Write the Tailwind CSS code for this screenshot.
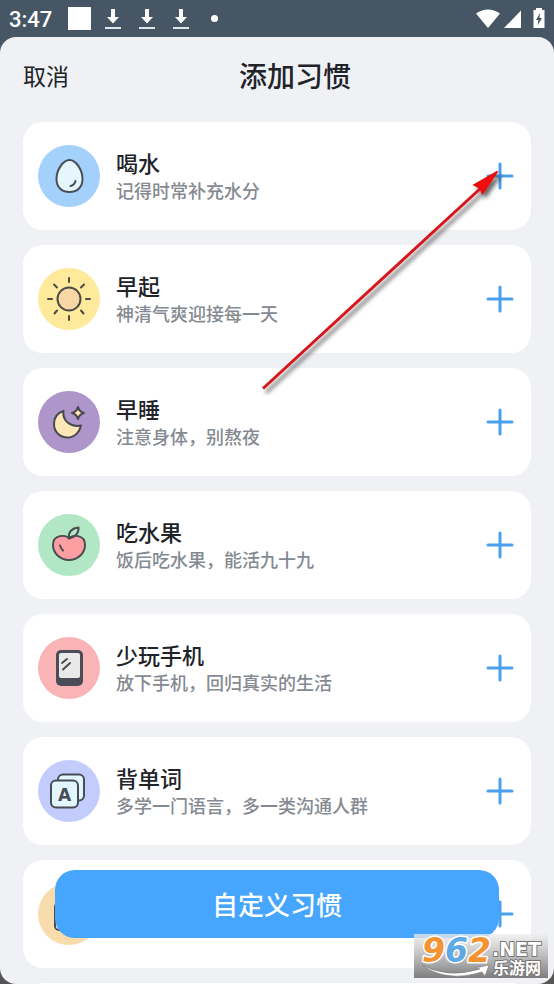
<!DOCTYPE html>
<html lang="zh-CN">
<head>
<meta charset="utf-8">
<meta name="viewport" content="width=device-width, initial-scale=1">
<title>添加习惯</title>
<script src="https://cdn.jsdelivr.net/npm/@tailwindcss/browser@4"></script>
</head>
<body class="relative flex h-screen flex-col overflow-hidden bg-linear-to-b from-[#465664] from-50% to-[#555555] to-50% font-['Noto_Sans_CJK_SC',sans-serif] text-[#202328]">

<svg class="hidden" aria-hidden="true">
  <symbol id="download" viewBox="0 0 16 22">
    <path d="M6 1h4v8h4l-6 6.500L2 9h4z" fill="#fff"/><path d="M0 19h16v2H0z" fill="#dfe8ea"/>
  </symbol>
  <symbol id="plus" viewBox="0 0 28 28">
    <path d="M14 2v24M2 14h24" fill="none" stroke="#4a9fee" stroke-width="3" stroke-linecap="round"/>
  </symbol>
</svg>

<header class="flex h-[37px] shrink-0 items-center justify-between pr-[9px] pl-[9px] text-white">
  <div class="flex items-center">
    <time class="w-[59px] pt-[2px] font-[Roboto,sans-serif] text-[22px] leading-6 font-medium">3:47</time>
    <span class="mr-[14px] size-[23px] bg-white"></span>
    <div class="flex items-center gap-[18px]">
      <svg class="h-[22px] w-4"><use href="#download"/></svg>
      <svg class="h-[22px] w-4"><use href="#download"/></svg>
      <svg class="h-[22px] w-4"><use href="#download"/></svg>
    </div>
    <span class="ml-[22px] size-[7px] rounded-full bg-white"></span>
  </div>
  <div class="flex items-end gap-1">
    <svg class="h-5 w-6" viewBox="0 0 24 20"><path d="M0 4.500Q12-3.500 24 4.500L12 19z" fill="#fff"/></svg>
    <svg class="h-5 w-[18px]" viewBox="0 0 18 20"><path d="M0 19L17 1.500V19z" fill="#fff"/></svg>
    <svg class="ml-[7px] h-[21px] w-3" viewBox="0 0 12 21"><path d="M3 0h6v2h2.500v18H.5V2H3z" fill="#fff"/><path d="M7 5L3 12h2.500L4.500 17.500 9 10H6.500z" fill="#465664"/></svg>
  </div>
</header>

<main class="flex min-h-0 flex-1 flex-col overflow-hidden rounded-[16px] bg-[#f0f1f5]">
  <div class="grid h-[85px] shrink-0 grid-cols-[1fr_auto_1fr] items-center px-[23px] pb-[9px]">
    <button type="button" class="justify-self-start text-[23px] leading-8">取消</button>
    <h1 class="ml-9 text-[28px] leading-10 font-medium">添加习惯</h1>
  </div>

  <ul class="flex flex-col gap-[15px] px-[23px]">
    <li class="flex h-[108px] shrink-0 items-center gap-4 rounded-[20px] bg-white pr-[17px] pl-[15px]">
      <svg class="size-[62px] shrink-0 rounded-full bg-[#a3d1fc]" viewBox="0 0 62 62" fill="none" stroke="#474d55" stroke-width="2" stroke-linecap="round">
        <path d="M31.500 15C25 15 18.500 25 18.500 34c0 8 5 13 13 13s13-5 13-13C44.500 25 38 15 31.500 15z" fill="#e6f6fd"/>
        <path d="M37.500 36q-1 4-5 5"/>
      </svg>
      <div class="flex min-w-0 flex-1 flex-col gap-[2px]">
        <h2 class="text-[22px] leading-[26px] font-medium">喝水</h2>
        <p class="text-[18px] leading-[26px] font-medium text-[#858a92]">记得时常补充水分</p>
      </div>
      <button type="button" aria-label="添加喝水"><svg class="size-7"><use href="#plus"/></svg></button>
    </li>

    <li class="flex h-[108px] shrink-0 items-center gap-4 rounded-[20px] bg-white pr-[17px] pl-[15px]">
      <svg class="size-[62px] shrink-0 rounded-full bg-[#ffea9c]" viewBox="0 0 62 62" fill="none" stroke="#4d4a48" stroke-width="2" stroke-linecap="round">
        <circle cx="31" cy="31" r="11.500" fill="#f8d7a4"/>
        <path d="M31 10v4M31 48v4M10 31h4M48 31h4M16 16.500l3 3M46 16.500l-3 3M16.500 45.500l2.500-3M45.500 45.500l-2.500-3"/>
      </svg>
      <div class="flex min-w-0 flex-1 flex-col gap-[2px]">
        <h2 class="text-[22px] leading-[26px] font-medium">早起</h2>
        <p class="text-[18px] leading-[26px] font-medium text-[#858a92]">神清气爽迎接每一天</p>
      </div>
      <button type="button" aria-label="添加早起"><svg class="size-7"><use href="#plus"/></svg></button>
    </li>

    <li class="flex h-[108px] shrink-0 items-center gap-4 rounded-[20px] bg-white pr-[17px] pl-[15px]">
      <svg class="size-[62px] shrink-0 rounded-full bg-[#ae95ca]" viewBox="0 0 62 62" fill="none" stroke="#474950" stroke-width="2" stroke-linejoin="round">
        <path d="M25.500 20C19 22 16 27 16 33c0 8 6 13.500 13.500 13.500 7 0 12-5 13.500-12C33 36.500 24 30 25.500 20z" fill="#ffe8b5"/>
        <path d="M40 16q1 4.500 6 6-5 1.500-6 6-1-4.500-6-6 5-1.500 6-6z" fill="#ffe8b5"/>
      </svg>
      <div class="flex min-w-0 flex-1 flex-col gap-[2px]">
        <h2 class="text-[22px] leading-[26px] font-medium">早睡</h2>
        <p class="text-[18px] leading-[26px] font-medium text-[#858a92]">注意身体，别熬夜</p>
      </div>
      <button type="button" aria-label="添加早睡"><svg class="size-7"><use href="#plus"/></svg></button>
    </li>

    <li class="flex h-[108px] shrink-0 items-center gap-4 rounded-[20px] bg-white pr-[17px] pl-[15px]">
      <svg class="size-[62px] shrink-0 rounded-full bg-[#b1e7c4]" viewBox="0 0 62 62" fill="none" stroke="#474d50" stroke-width="2" stroke-linecap="round" stroke-linejoin="round">
        <path d="M31 24.500C28 20.500 15 20 15 31c0 8 7 15 16 15s16-7 16-15C47 20 34 20.500 31 24.500z" fill="#fd9fa2"/>
        <path d="M31 24.500C30 18 34 14 40.500 13.500 41 19 37 23 31 24.500z"/>
        <path d="M22 31.500q1 3 3 5"/>
      </svg>
      <div class="flex min-w-0 flex-1 flex-col gap-[2px]">
        <h2 class="text-[22px] leading-[26px] font-medium">吃水果</h2>
        <p class="text-[18px] leading-[26px] font-medium text-[#858a92]">饭后吃水果，能活九十九</p>
      </div>
      <button type="button" aria-label="添加吃水果"><svg class="size-7"><use href="#plus"/></svg></button>
    </li>

    <li class="flex h-[108px] shrink-0 items-center gap-4 rounded-[20px] bg-white pr-[17px] pl-[15px]">
      <svg class="size-[62px] shrink-0 rounded-full bg-[#fab4b5]" viewBox="0 0 62 62" fill="none">
        <rect x="18" y="13" width="27" height="36" rx="5" fill="#4a4d57"/>
        <rect x="21" y="16" width="21" height="25" rx="2" fill="#e9e9ea"/>
        <path d="M24 26l5-4M25 32.500l7-6.500" stroke="#4a4d57" stroke-width="2" stroke-linecap="round"/>
      </svg>
      <div class="flex min-w-0 flex-1 flex-col gap-[2px]">
        <h2 class="text-[22px] leading-[26px] font-medium">少玩手机</h2>
        <p class="text-[18px] leading-[26px] font-medium text-[#858a92]">放下手机，回归真实的生活</p>
      </div>
      <button type="button" aria-label="添加少玩手机"><svg class="size-7"><use href="#plus"/></svg></button>
    </li>

    <li class="flex h-[108px] shrink-0 items-center gap-4 rounded-[20px] bg-white pr-[17px] pl-[15px]">
      <svg class="size-[62px] shrink-0 rounded-full bg-[#c2ccfd]" viewBox="0 0 62 62" fill="#e2f6fd" stroke="#474d55" stroke-width="2">
        <rect x="20" y="14.500" width="26" height="26" rx="5"/>
        <rect x="13" y="20.500" width="27" height="27" rx="5"/>
        <text x="26.500" y="40.500" text-anchor="middle" font-family="DejaVu Sans, sans-serif" font-weight="700" font-size="17" fill="#474d55" stroke="none">A</text>
      </svg>
      <div class="flex min-w-0 flex-1 flex-col gap-[2px]">
        <h2 class="text-[22px] leading-[26px] font-medium">背单词</h2>
        <p class="text-[18px] leading-[26px] font-medium text-[#858a92]">多学一门语言，多一类沟通人群</p>
      </div>
      <button type="button" aria-label="添加背单词"><svg class="size-7"><use href="#plus"/></svg></button>
    </li>

    <li class="flex h-[108px] shrink-0 items-center gap-4 rounded-[20px] bg-white pr-[17px] pl-[15px]">
      <svg class="size-[62px] shrink-0 rounded-full bg-[#f8dcab]" viewBox="0 0 62 62" fill="#fff" stroke="#474d55" stroke-width="2">
        <rect x="17" y="20" width="28" height="27" rx="4"/>
      </svg>
      <div class="flex min-w-0 flex-1 flex-col gap-[2px]">
        <h2 class="text-[22px] leading-[26px] font-medium">阅读</h2>
        <p class="text-[18px] leading-[26px] font-medium text-[#858a92]">坚持阅读充实自己</p>
      </div>
      <button type="button" aria-label="添加阅读"><svg class="size-7"><use href="#plus"/></svg></button>
    </li>

    <li class="h-[108px] shrink-0 rounded-[20px] bg-white"></li>
  </ul>
</main>

<button type="button" class="absolute inset-x-[55px] bottom-[46px] h-[68px] rounded-[20px] bg-[#46a5fd] text-[26px] leading-10 font-medium text-white">自定义习惯</button>

<svg class="pointer-events-none absolute top-[160px] left-[255px] h-[240px] w-[260px]" viewBox="255 160 260 240" aria-hidden="true">
  <defs><filter id="shade" x="-10%" y="-10%" width="130%" height="130%"><feDropShadow dx="3" dy="4" stdDeviation="2" flood-color="#000" flood-opacity=".6"/></filter></defs>
  <g filter="url(#shade)">
    <path d="M263 388.500L482 187" stroke="#d5161c" stroke-width="3"/>
    <path d="M497.500 171.500L474 185 480 188 482.500 193.500z" fill="#f50a0a" stroke="#e01010" stroke-width="1.500"/>
  </g>
</svg>

<svg class="absolute right-[6px] bottom-[6px] h-11 w-[134px] overflow-visible" viewBox="0 0 134 44" role="img" aria-label="962.NET 乐游网">
  <defs>
    <linearGradient id="plate" x2="0" y2="1"><stop stop-color="#eee" stop-opacity=".75"/><stop offset="1" stop-color="#777" stop-opacity=".95"/></linearGradient>
  </defs>
  <path d="M0 0h134v44H0z" fill="url(#plate)"/>
  <path d="M8 31Q34 45 66 35l-5-1 14-3-4 11-3-4Q32 49 8 31z" fill="#fff" stroke="#777" stroke-width=".6"/>
  <g font-family="DejaVu Sans, sans-serif" font-weight="700" font-style="italic" font-size="33" stroke="#fff" stroke-width="3" stroke-linejoin="round" paint-order="stroke">
    <text x="8" y="28" fill="#f59332">9</text>
    <text x="31" y="28" fill="#5ea9e4">6</text>
    <text x="54" y="28" fill="#f59332">2</text>
  </g>
  <g fill="#fff" stroke="#777" stroke-width="2" stroke-linejoin="round" paint-order="stroke" font-weight="700">
    <text x="78" y="22" font-size="19" font-family="DejaVu Sans, sans-serif">.NET</text>
    <text x="79" y="40" font-size="16" font-family="Noto Sans CJK SC, sans-serif">乐游网</text>
  </g>
</svg>
</body>
</html>
